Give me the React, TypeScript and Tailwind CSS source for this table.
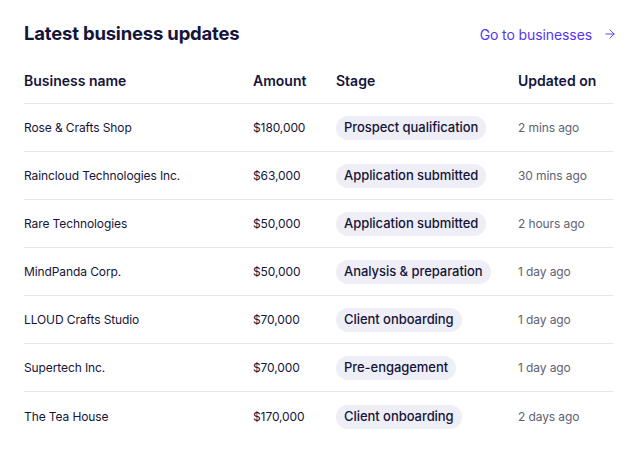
import { ArrowRight } from "lucide-react";

type Row = {
  name: string;
  amount: string;
  stage: string;
  updated: string;
};

const rows: Row[] = [
  { name: "Rose & Crafts Shop", amount: "$180,000", stage: "Prospect qualification", updated: "2 mins ago" },
  { name: "Raincloud Technologies Inc.", amount: "$63,000", stage: "Application submitted", updated: "30 mins ago" },
  { name: "Rare Technologies", amount: "$50,000", stage: "Application submitted", updated: "2 hours ago" },
  { name: "MindPanda Corp.", amount: "$50,000", stage: "Analysis & preparation", updated: "1 day ago" },
  { name: "LLOUD Crafts Studio", amount: "$70,000", stage: "Client onboarding", updated: "1 day ago" },
  { name: "Supertech Inc.", amount: "$70,000", stage: "Pre-engagement", updated: "1 day ago" },
  { name: "The Tea House", amount: "$170,000", stage: "Client onboarding", updated: "2 days ago" },
];

export default function App() {
  return (
    <div
      className="w-[643px] h-[465px] bg-white pl-6 pr-[30px] pt-[22px] text-[#15143a]"
      style={{ fontFamily: "Inter, 'Noto Sans', sans-serif" }}
    >
      {/* Header */}
      <div className="flex items-center justify-between h-6">
        <h2 className="text-[18.5px] font-bold tracking-[-0.2px]">Latest business updates</h2>
        <a className="flex items-center gap-[11px] -mr-[4px] text-[14px] text-[#5635f2] tracking-[-0.1px]">
          Go to businesses
          <ArrowRight className="h-[14px] w-[14px]" strokeWidth={1.6} />
        </a>
      </div>

      {/* Table */}
      <div className="mt-[11px]">
        <div className="grid grid-cols-[229px_83px_182px_1fr] h-[47px] items-center border-b border-[#e5e5ec] text-[14px] font-semibold">
          <div>Business name</div>
          <div>Amount</div>
          <div>Stage</div>
          <div>Updated on</div>
        </div>
        {rows.map((row, i) => (
          <div
            key={row.name}
            className={`grid grid-cols-[229px_83px_182px_1fr] h-[48px] items-center pt-px text-[12px] tracking-[-0.1px] ${
              i < rows.length - 1 ? "border-b border-[#e5e5ec]" : ""
            }`}
          >
            <div>{row.name}</div>
            <div>{row.amount}</div>
            <div>
              <span className="inline-flex h-6 items-center rounded-full bg-[#eeeef6] px-2 text-[13px] font-medium tracking-[-0.05px]">
                {row.stage}
              </span>
            </div>
            <div className="text-[#5e6275]">{row.updated}</div>
          </div>
        ))}
      </div>
    </div>
  );
}
